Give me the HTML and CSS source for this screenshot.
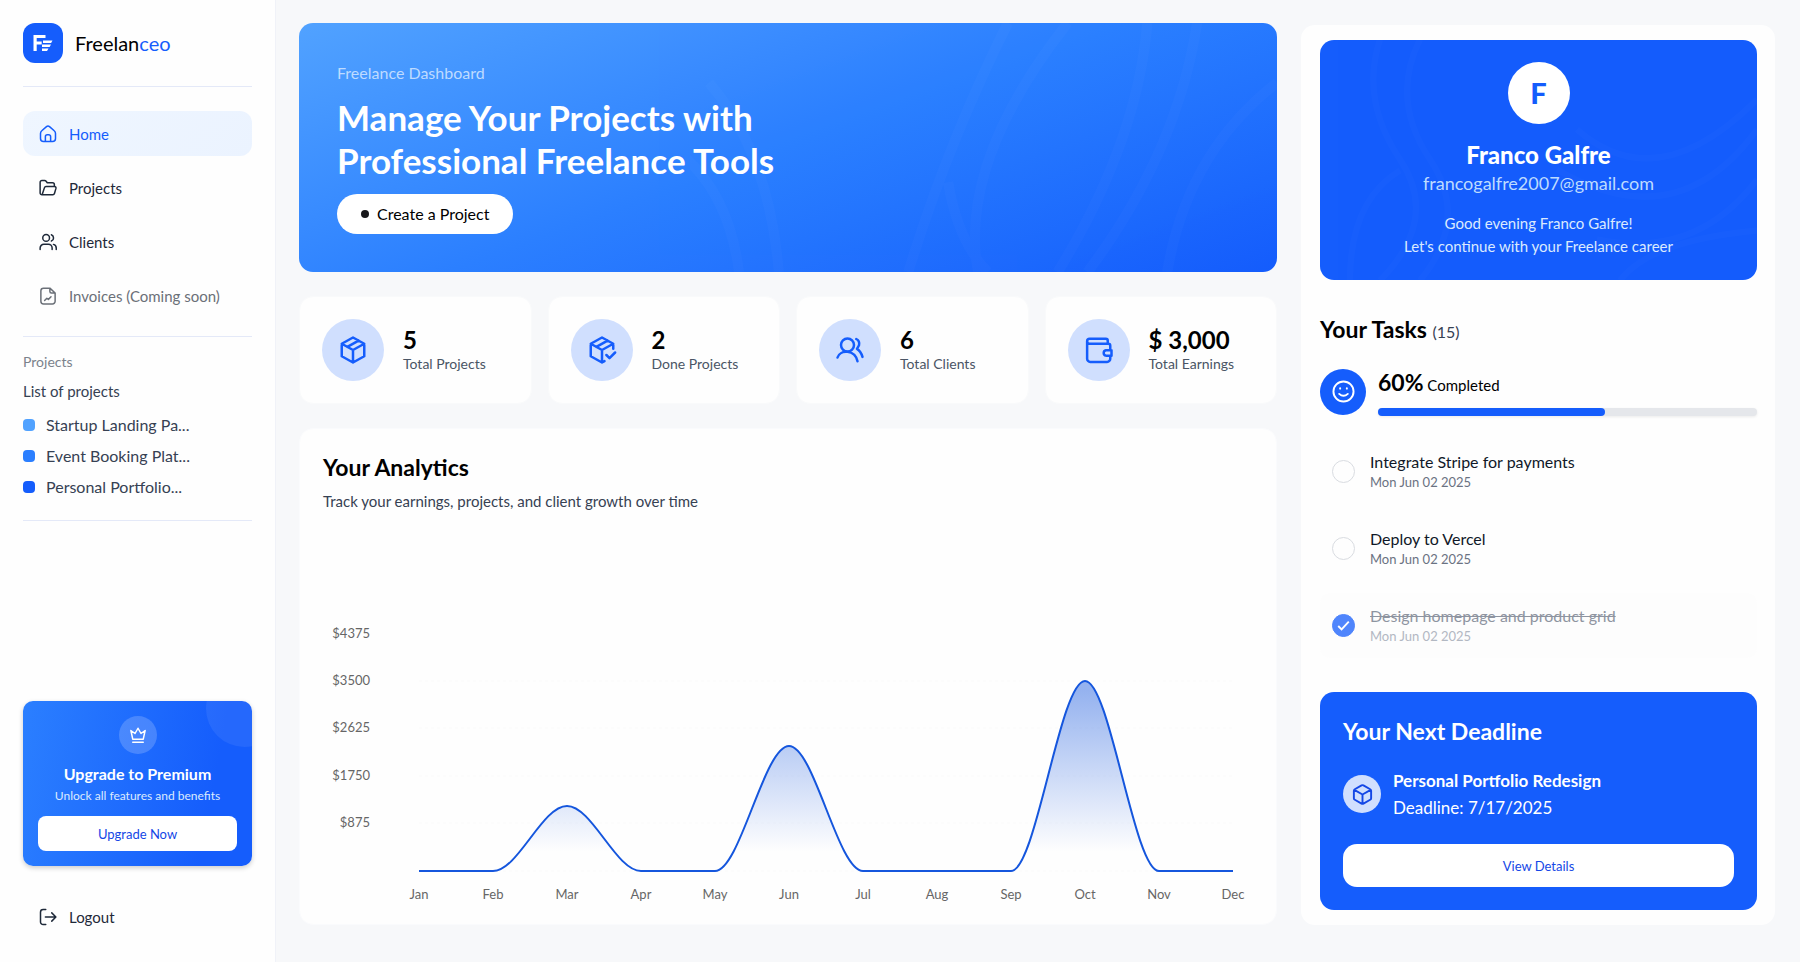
FILE: index.html
```html
<!DOCTYPE html>
<html lang="en">
<head>
<meta charset="utf-8">
<meta name="viewport" content="width=device-width, initial-scale=1">
<title>Freelanceo</title>
<link rel="stylesheet" href="styles.css">
</head>
<body>
<div class="shell">
  <aside class="sidebar">
    <a class="brand" href="#">
      <svg class="brand-mark" viewBox="0 0 40 40" aria-hidden="true"><rect width="40" height="40" rx="12"/><path class="brand-lines" d="M10.500 12h12v3h-8.800v3.500h5v3h-5V28h-3.200zM20 17.500h9.500l-1.400 2.400H20zM19 21.500h9l-1.400 2.400H19zM19 25.600h6.500L24 28h-5z"/></svg>
      <span>Freelan<b>ceo</b></span>
    </a>
    <nav class="nav">
      <a class="nav-item active" href="#"><svg class="icon" viewBox="0 0 24 24"><path d="M2 11.200c0-1.400.6-2.600 1.700-3.500L10 2.200a3 3 0 0 1 4 0l6.300 5.500c1.100.9 1.700 2.100 1.700 3.500V18a4 4 0 0 1-4 4H6a4 4 0 0 1-4-4zM8.500 22v-6.500a2.500 2.500 0 0 1 2.500-2.500h2a2.500 2.500 0 0 1 2.500 2.500V22"/></svg>Home</a>
      <a class="nav-item" href="#"><svg class="icon" viewBox="0 0 24 24"><path d="M5 21h13.500c1 0 1.800-.6 2.100-1.600l2-6.900c.3-1.300-.6-2.500-1.900-2.500H9.300c-1 0-1.700.6-2 1.500L4.500 20M5 21H4a2.500 2.500 0 0 1-2.500-2.500V4.500A2.500 2.500 0 0 1 4 2h3.500c.8 0 1.500.4 2 1L11 5h7a2.500 2.500 0 0 1 2.500 2.500V10"/></svg>Projects</a>
      <a class="nav-item" href="#"><svg class="icon" viewBox="0 0 24 24"><circle cx="9.500" cy="6.500" r="4.500"/><path d="M1.500 22v-2a5 5 0 0 1 5-5h6a5 5 0 0 1 5 5v2M16.500 2.300a4.500 4.500 0 0 1 0 8.400M19.300 15.200a5 5 0 0 1 3.700 4.800v2"/></svg>Clients</a>
      <a class="nav-item muted" href="#"><svg class="icon" viewBox="0 0 24 24"><path d="M14.500 1.500H6A3.500 3.500 0 0 0 2.500 5v14A3.500 3.500 0 0 0 6 22.500h12a3.500 3.500 0 0 0 3.500-3.500V8zM14.500 1.500V6a2 2 0 0 0 2 2h5M7.500 18l3-3 2 1.500 3.500-3.500"/></svg>Invoices (Coming soon)</a>
    </nav>
    <section class="project-list">
      <h2>Projects</h2>
      <h3>List of projects</h3>
      <ul>
        <li><i class="swatch light"></i>Startup Landing Pa...</li>
        <li><i class="swatch mid"></i>Event Booking Plat...</li>
        <li><i class="swatch deep"></i>Personal Portfolio...</li>
      </ul>
    </section>
    <section class="upgrade">
      <span class="crown"><svg class="icon" viewBox="0 0 24 24"><path d="M5 17.500L2.500 6l5.500 4 4-7 4 7 5.500-4L19 17.500zM5 21.500h14"/></svg></span>
      <h2>Upgrade to Premium</h2>
      <p>Unlock all features and benefits</p>
      <button type="button">Upgrade Now</button>
    </section>
    <button class="nav-item logout" type="button"><svg class="icon" viewBox="0 0 24 24"><path d="M9 2H5.500A3.500 3.500 0 0 0 2 5.500v13A3.500 3.500 0 0 0 5.500 22H9M8.500 12H22M17 6.500l5.500 5.500-5.500 5.500"/></svg>Logout</button>
  </aside>

  <main class="main">
    <section class="hero">
      <svg class="waves" viewBox="0 0 600 250" preserveAspectRatio="xMaxYMid slice" aria-hidden="true"><path d="M30 60q60 70 70 190M0 130q50 40 60 120M330 0q-60 120-100 250M390 0q-110 140-90 250M470 0q-10 120-90 250M520 0q-20 130-110 250M600 60q-90 70-110 190M270 160q10 60 40 90"/></svg>
      <p>Freelance Dashboard</p>
      <h1>Manage Your Projects with<br>Professional Freelance Tools</h1>
      <button type="button"><i></i>Create a Project</button>
    </section>

    <section class="stats">
      <article class="stat"><span class="stat-icon"><svg class="icon" viewBox="0 0 24 24"><path d="M12 2l9 5v10l-9 5-9-5V7zM12 12l9-5M12 12v10M12 12L3 7M16.500 4.500l-9 5"/></svg></span><div><strong>5</strong><span>Total Projects</span></div></article>
      <article class="stat"><span class="stat-icon"><svg class="icon" viewBox="0 0 24 24"><path d="M21 11V7l-9-5-9 5v10l9 5 2-1.100M12 12l9-5M12 12v10M12 12L3 7M16.500 4.500l-9 5M15.500 16l2.500 2.500 4.500-4.500"/></svg></span><div><strong>2</strong><span>Done Projects</span></div></article>
      <article class="stat"><span class="stat-icon"><svg class="icon" viewBox="0 0 24 24"><circle cx="10" cy="8" r="5.200"/><path d="M2 18c2-6.500 14-6.500 16 3M17 3.200q3 1.500 2.200 5l-1.600 2.900q3 1.800 4.400 6.400"/></svg></span><div><strong>6</strong><span>Total Clients</span></div></article>
      <article class="stat"><span class="stat-icon"><svg class="icon" viewBox="0 0 24 24"><path d="M19 7V4.500A1.500 1.500 0 0 0 17.500 3H4.500a2 2 0 0 0 0 4H19.500A1.500 1.500 0 0 1 21 8.500V12M2.500 5v14A2.500 2.500 0 0 0 5 21.500h13.500A2.500 2.500 0 0 0 21 19v-2.500M22 12.200h-4.500a2.200 2.200 0 0 0 0 4.300H22z"/></svg></span><div><strong>$ 3,000</strong><span>Total Earnings</span></div></article>
    </section>

    <section class="analytics">
      <h2>Your Analytics</h2>
      <p>Track your earnings, projects, and client growth over time</p>
      <svg class="chart" viewBox="0 0 930 280" role="img" aria-label="Monthly earnings">
        <defs><linearGradient id="area" x1="0" y1="0" x2="0" y2="1"><stop offset="5%" stop-color="#1556dd" stop-opacity=".45"/><stop offset="90%" stop-color="#1556dd" stop-opacity="0"/></linearGradient></defs>
        <path class="grid" d="M96 61h814M96 108h814M96 156h814M96 203h814M96 251h814"/>
        <path class="fill" fill="url(#area)" d="M96 251H170C195 251 219 186 244 186S293 251 318 251H392C417 251 441 126 466 126S515 251 540 251H688C713 251 737 61 762 61S811 251 836 251H910z"/>
        <path class="line" d="M96 251H170C195 251 219 186 244 186S293 251 318 251H392C417 251 441 126 466 126S515 251 540 251H688C713 251 737 61 762 61S811 251 836 251H910"/>
        <g class="y-labels"><text x="47" y="18">$4375</text><text x="47" y="65">$3500</text><text x="47" y="112">$2625</text><text x="47" y="160">$1750</text><text x="47" y="207">$875</text></g>
        <g class="x-labels"><text x="96" y="279">Jan</text><text x="170" y="279">Feb</text><text x="244" y="279">Mar</text><text x="318" y="279">Apr</text><text x="392" y="279">May</text><text x="466" y="279">Jun</text><text x="540" y="279">Jul</text><text x="614" y="279">Aug</text><text x="688" y="279">Sep</text><text x="762" y="279">Oct</text><text x="836" y="279">Nov</text><text x="910" y="279">Dec</text></g>
      </svg>
    </section>
  </main>

  <aside class="panel">
    <section class="profile">
      <svg class="rings" viewBox="0 0 437 241" preserveAspectRatio="xMidYMid slice" aria-hidden="true"><path d="M60 0q-20 60 20 120t-20 121M30 241q0-80 50-110M100 0q-30 60 10 120t-10 121M437 60q-100 100-180 30M437 90q-80 110-200 40M437 140q-60 80-160 60M300 241q30-40 137-50"/></svg>
      <span class="avatar">F</span>
      <h2>Franco Galfre</h2>
      <p class="email">francogalfre2007@gmail.com</p>
      <p class="greeting">Good evening Franco Galfre!<br>Let's continue with your Freelance career</p>
    </section>

    <section class="tasks">
      <h2>Your Tasks <small>(15)</small></h2>
      <div class="progress">
        <span class="smile"><svg class="icon" viewBox="0 0 24 24"><circle cx="12" cy="12" r="10.500"/><path d="M7.500 14.500q4.500 4 9 0M8.500 8.500v.5M15.500 8.500v.5"/></svg></span>
        <div class="progress-body">
          <div class="progress-label"><strong>60%</strong> Completed</div>
          <div class="track" role="progressbar" aria-label="Completed tasks" aria-valuenow="60" aria-valuemin="0" aria-valuemax="100"><div class="bar" style="width:60%"></div></div>
        </div>
      </div>
      <ul class="task-list">
        <li><label><input type="checkbox"><span><b>Integrate Stripe for payments</b><time>Mon Jun 02 2025</time></span></label></li>
        <li><label><input type="checkbox"><span><b>Deploy to Vercel</b><time>Mon Jun 02 2025</time></span></label></li>
        <li class="done"><label><span class="tick"><input type="checkbox" checked><svg viewBox="0 0 24 24" aria-hidden="true"><path d="M6.500 12.500l3.500 3.500 7.500-8"/></svg></span><span><b>Design homepage and product grid</b><time>Mon Jun 02 2025</time></span></label></li>
      </ul>
    </section>

    <section class="deadline">
      <h2>Your Next Deadline</h2>
      <div class="deadline-row">
        <span class="deadline-icon"><svg class="icon" viewBox="0 0 24 24"><path d="M11 2.500a2 2 0 0 1 2 0l7 4a2 2 0 0 1 1 1.700v7.600a2 2 0 0 1-1 1.700l-7 4a2 2 0 0 1-2 0l-7-4a2 2 0 0 1-1-1.700V8.200a2 2 0 0 1 1-1.700zM12 12l8.500-4.800M12 12v9.500M12 12L3.500 7.200"/></svg></span>
        <div><strong>Personal Portfolio Redesign</strong><p>Deadline: 7/17/2025</p></div>
      </div>
      <button type="button">View Details</button>
    </section>
  </aside>
</div>
</body>
</html>
```
FILE: styles.css
```css
*, *::before, *::after { box-sizing: border-box; }
:root {
  --blue: #155dfc;
  --ink: #1e2939;
  --soft: #4a5565;
  --line: #e4e9f8;
}
body {
  margin: 0;
  background: #f7f8fa;
  color: #000;
  font: 15px/20px Lato, sans-serif;
}
h1, h2, h3, p, ul { margin: 0; padding: 0; font-weight: 400; }
ul { list-style: none; }
a { color: inherit; text-decoration: none; }
button { border: 0; font: inherit; cursor: pointer; }
.icon {
  flex: none;
  width: 18px;
  height: 18px;
  fill: none;
  stroke: currentColor;
  stroke-width: 2;
  stroke-linecap: round;
  stroke-linejoin: round;
}
.shell { display: flex; min-height: 100vh; }

/* Sidebar */
.sidebar {
  display: flex;
  flex-direction: column;
  flex: none;
  width: 276px;
  padding: 23px;
  background: #fefefe;
  border-right: 1px solid #f0f2f8;
}
.brand {
  display: flex;
  align-items: center;
  gap: 12px;
  padding-bottom: 23px;
  border-bottom: 1px solid var(--line);
  font-size: 20px;
}
.brand b { color: var(--blue); font-weight: 400; }
.brand-mark { width: 40px; height: 40px; fill: var(--blue); }
.brand-lines { fill: #fff; }
.nav {
  display: flex;
  flex-direction: column;
  gap: 9px;
  padding: 24px 0 18px;
  border-bottom: 1px solid var(--line);
}
.nav-item {
  display: flex;
  align-items: center;
  gap: 12px;
  height: 45px;
  padding: 0 16px;
  border-radius: 12px;
  background: none;
  color: var(--ink);
}
.nav-item.active { background: linear-gradient(135deg, #eff6ff, #ebf3ff); color: var(--blue); }
.nav-item.muted { color: #6b7078; }
.project-list { padding: 15px 0 18px; border-bottom: 1px solid var(--line); }
.project-list h2 { color: #7b828c; font-size: 14px; }
.project-list h3 { margin: 9px 0 8px; color: #364153; font-size: 15px; }
.project-list li {
  display: flex;
  align-items: center;
  gap: 11px;
  height: 31px;
  color: #364153;
  font-size: 16px;
}
.swatch { width: 12px; height: 12px; border-radius: 4px; }
.swatch.light { background: #51a2ff; }
.swatch.mid { background: #2b7fff; }
.swatch.deep { background: #155dfc; }
.upgrade {
  position: relative;
  display: flex;
  flex-direction: column;
  align-items: center;
  margin-top: auto;
  padding: 15px;
  overflow: hidden;
  border-radius: 10px;
  background: linear-gradient(100deg, #2b7fff, #155dfc 80%);
  box-shadow: 0 2px 5px #0003;
  color: #fff;
}
.upgrade::after {
  content: "";
  position: absolute;
  top: -31px;
  right: -31px;
  width: 77px;
  height: 77px;
  border-radius: 50%;
  background: #ffffff12;
}
.crown {
  display: grid;
  place-items: center;
  width: 38px;
  height: 38px;
  margin-bottom: 10px;
  border-radius: 50%;
  background: #ffffff30;
}
.upgrade h2 { font-size: 16px; font-weight: 700; }
.upgrade p { margin: 2px 0 10px; color: #dbeafe; font-size: 12px; }
.upgrade button {
  width: 100%;
  height: 35px;
  border-radius: 8px;
  background: #fff;
  color: #1447e6;
  font-size: 13px;
}
.logout { margin-top: 28px; }

/* Main column */
.main {
  display: flex;
  flex: 1;
  flex-direction: column;
  min-width: 0;
  padding: 23px 24px 37px 23px;
}
.hero {
  position: relative;
  overflow: hidden;
  padding: 38px;
  border-radius: 14px;
  background: linear-gradient(160deg, #51a2ff, #2b7fff 50%, #155dfc);
  color: #fff;
}
.waves {
  position: absolute;
  top: 0;
  right: 0;
  width: 60%;
  height: 100%;
  fill: none;
  stroke: #fff;
  stroke-width: 10;
  opacity: .015;
}
.hero p { color: #bedbff; font-size: 16px; line-height: 24px; }
.hero h1 { margin: 11px 0 12px; font-size: 35px; font-weight: 700; line-height: 43px; }
.hero button {
  display: flex;
  align-items: center;
  gap: 8px;
  height: 40px;
  padding: 0 24px;
  border-radius: 20px;
  background: #fff;
  font-size: 16px;
}
.hero i { width: 8px; height: 8px; border-radius: 50%; background: #18181b; }
.stats { display: grid; grid-template-columns: repeat(4, 1fr); gap: 16px; margin: 24px 0; }
.stat {
  display: flex;
  align-items: center;
  gap: 19px;
  padding: 22px;
  border: 1px solid #f9fafb;
  border-radius: 14px;
  background: #fefefe;
}
.stat-icon {
  display: grid;
  flex: none;
  place-items: center;
  width: 62px;
  height: 62px;
  border-radius: 50%;
  background: #d0dffe;
  color: var(--blue);
}
.stat .icon { width: 30px; height: 30px; }
.stat div { display: grid; }
.stat strong { font-size: 24px; font-weight: 700; line-height: 28px; }
.stat div span { color: var(--soft); font-size: 14px; }
.analytics {
  display: flex;
  flex: 1;
  flex-direction: column;
  padding: 24px 23px;
  border: 1px solid #fafbfd;
  border-radius: 14px;
  background: #fefefe;
}
.analytics h2 { font-size: 23px; font-weight: 700; line-height: 28px; }
.analytics p { margin-top: 8px; color: #364153; line-height: 24px; }
.chart { width: 100%; margin-top: auto; overflow: visible; }
.chart text { fill: #666; font-size: 13px; }
.y-labels { text-anchor: end; }
.x-labels { text-anchor: middle; }
.grid { stroke: #fafafa; stroke-dasharray: 3 3; }
.line { fill: none; stroke: #1556dd; stroke-width: 2; }

/* Right panel */
.panel {
  display: flex;
  flex: none;
  flex-direction: column;
  width: 474px;
  margin: 25px 25px 37px 0;
  padding: 15px 18px 15px 19px;
  border-radius: 14px;
  background: #fefefe;
}
.profile {
  position: relative;
  display: flex;
  flex-direction: column;
  align-items: center;
  overflow: hidden;
  padding: 22px 20px;
  border-radius: 14px;
  background: var(--blue);
  color: #fff;
  text-align: center;
}
.rings {
  position: absolute;
  inset: 0;
  width: 100%;
  height: 100%;
  fill: none;
  stroke: #fff;
  stroke-width: 6;
  opacity: .01;
}
.avatar {
  display: grid;
  place-items: center;
  width: 62px;
  height: 62px;
  border-radius: 50%;
  background: #fff;
  color: var(--blue);
  font-size: 29px;
  font-weight: 900;
}
.profile h2 { margin-top: 16px; font-size: 24px; font-weight: 900; line-height: 30px; }
.email { color: #bedbff; font-size: 18px; line-height: 26px; }
.greeting { margin-top: 16px; color: #dbeafe; line-height: 23px; }
.tasks > h2 { margin-top: 34px; font-size: 23px; font-weight: 700; line-height: 30px; }
.tasks small { color: #364153; font-size: 16px; font-weight: 400; }
.progress { display: flex; align-items: center; gap: 12px; margin: 20px 0 23px; }
.smile {
  display: grid;
  flex: none;
  place-items: center;
  width: 46px;
  height: 46px;
  border-radius: 50%;
  background: var(--blue);
  color: #fff;
}
.smile .icon { width: 23px; height: 23px; }
.progress-body { flex: 1; }
.progress-label { line-height: 30px; margin-bottom: 8px; }
.progress-label strong { font-size: 23px; }
.track { height: 8px; border-radius: 4px; background: #e5e7eb; box-shadow: 0 1px 3px #00000014; }
.bar { height: 100%; border-radius: 4px; background: var(--blue); }
.task-list { display: grid; gap: 12px; }
.task-list label { display: flex; align-items: center; gap: 15px; height: 65px; padding: 0 12px; }
.task-list input {
  appearance: none;
  display: block;
  flex: none;
  width: 23px;
  height: 23px;
  margin: 0;
  border: 1px solid #d9dce1;
  border-radius: 50%;
}
.task-list input:checked { border-color: var(--blue); background: var(--blue); }
.task-list b, .task-list time { display: block; font-weight: 400; line-height: 21px; }
.task-list b { color: #101828; font-size: 16px; }
.task-list time { color: #6a7282; font-size: 13px; }
.done { border-radius: 10px; background: #fdfdfd; }
.done label { opacity: .75; }
.task-list .done b { color: #6a7282; text-decoration: line-through; }
.task-list .done time { color: #99a1af; }
.tick { position: relative; }
.tick svg {
  position: absolute;
  inset: 0;
  width: 23px;
  height: 23px;
  fill: none;
  stroke: #fff;
  stroke-width: 2;
  pointer-events: none;
}
.deadline { margin-top: auto; padding: 23px; border-radius: 14px; background: var(--blue); color: #fff; }
.deadline h2 { font-size: 23px; font-weight: 700; line-height: 32px; }
.deadline-row { display: flex; align-items: center; gap: 12px; margin: 20px 0 23px; }
.deadline-icon {
  display: grid;
  flex: none;
  place-items: center;
  width: 38px;
  height: 38px;
  border-radius: 50%;
  background: #d0dffe;
  color: #1447e6;
}
.deadline-icon .icon { width: 23px; height: 23px; }
.deadline strong, .deadline p { font-size: 17px; line-height: 27px; }
.deadline strong { display: block; }
.deadline button {
  width: 100%;
  height: 43px;
  border-radius: 14px;
  background: #fff;
  color: #1447e6;
  font-size: 13px;
}
```
